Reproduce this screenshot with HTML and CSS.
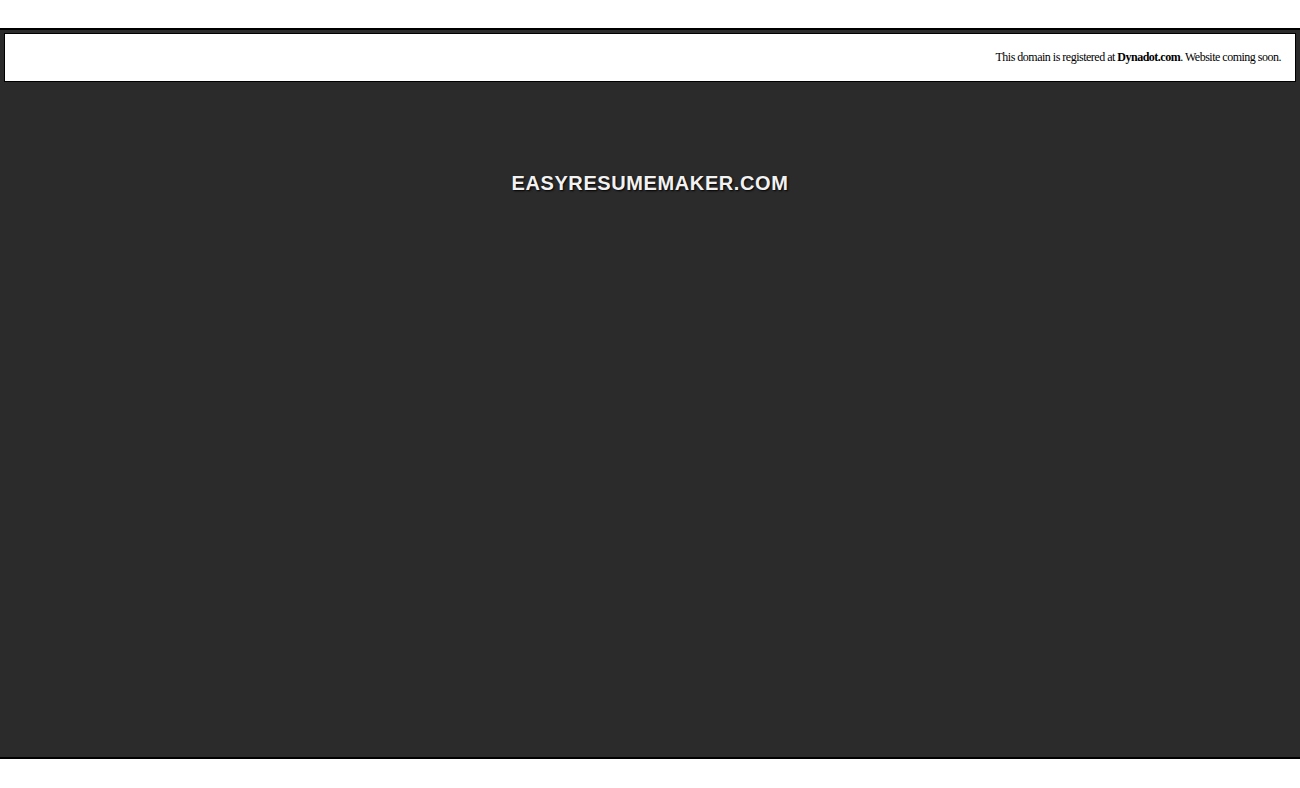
FILE: index.html
```html
<!DOCTYPE html>
<html>
<head>
<meta charset="utf-8">
<title>easyresumemaker.com</title>
<link rel="stylesheet" href="styles.css">
</head>
<body>
<div class="page">
  <div class="notice"><span class="notice-text">This domain is registered at <b>Dynadot.com</b>. Website coming soon.</span></div>
  <h1 class="title">EASYRESUMEMAKER.COM</h1>
</div>
</body>
</html>
```
FILE: styles.css
```css
html, body {
  margin: 0;
  padding: 0;
  background: #fff;
}
.page {
  margin-top: 28px;
  height: 724px;
  background: #2b2b2b;
  border-top: 2px solid #000;
  border-bottom: 2px solid #000;
  padding-top: 3px;
  box-sizing: content-box;
}
.notice {
  margin: 0 4px 0 4px;
  height: 47px;
  background: #fff;
  border: 1px solid #000;
  display: flex;
  align-items: center;
  justify-content: flex-end;
  padding-right: 14px;
  font-family: "Liberation Serif", serif;
  font-size: 12px;
  letter-spacing: -0.5px;
  color: #000;
}
.title {
  margin: 89px 0 0;
  text-align: center;
  font-family: "Liberation Sans", Arial, sans-serif;
  font-weight: bold;
  font-size: 20px;
  letter-spacing: 0.6px;
  color: #f2f2f2;
  line-height: 24px;
  text-shadow: 1px 1px 2px #000;
}
```
